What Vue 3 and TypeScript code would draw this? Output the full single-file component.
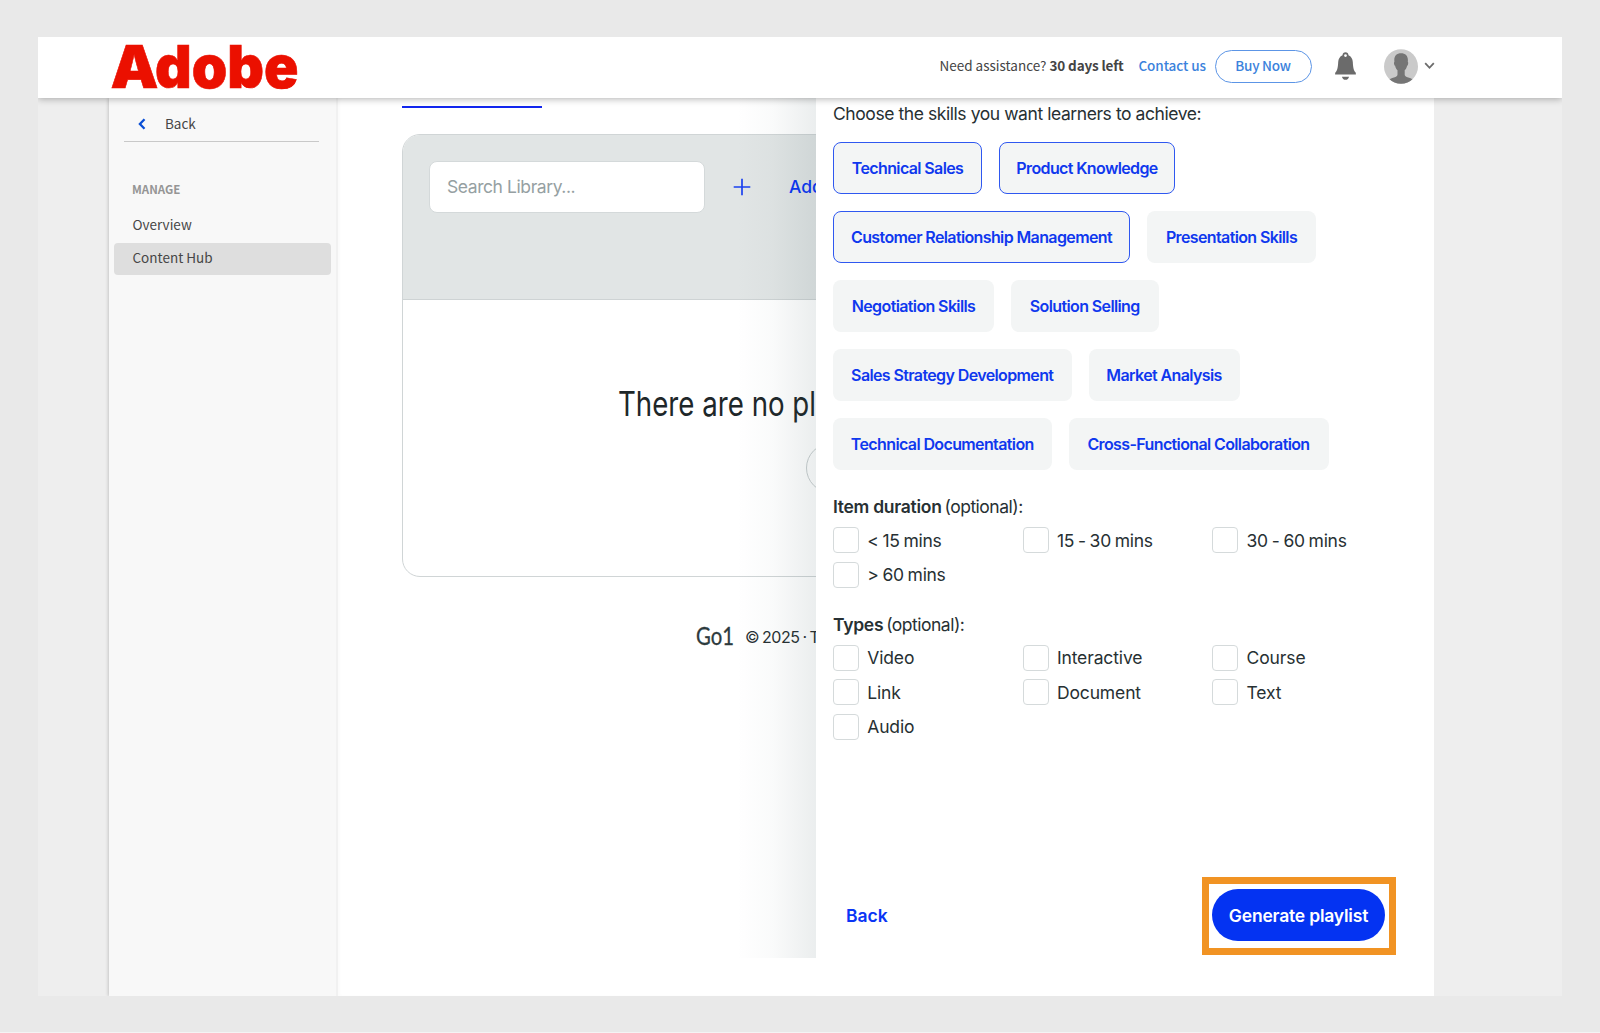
<script setup lang="ts">
import { ref } from 'vue'

interface Skill {
  label: string
  width: number
  selected: boolean
}

const skillRows = ref<Skill[][]>([
  [
    { label: 'Technical Sales', width: 149, selected: true },
    { label: 'Product Knowledge', width: 176, selected: true },
  ],
  [
    { label: 'Customer Relationship Management', width: 297, selected: true },
    { label: 'Presentation Skills', width: 169, selected: false },
  ],
  [
    { label: 'Negotiation Skills', width: 161, selected: false },
    { label: 'Solution Selling', width: 147.5, selected: false },
  ],
  [
    { label: 'Sales Strategy Development', width: 238.5, selected: false },
    { label: 'Market Analysis', width: 151, selected: false },
  ],
  [
    { label: 'Technical Documentation', width: 218.5, selected: false },
    { label: 'Cross-Functional Collaboration', width: 260, selected: false },
  ],
])

const durations = ['< 15 mins', '15 - 30 mins', '30 - 60 mins', '> 60 mins']
const types = ['Video', 'Interactive', 'Course', 'Link', 'Document', 'Text', 'Audio']
</script>

<template>
  <div class="page">
    <div class="frame">
      <header class="topbar">
        <svg class="logo" width="190" height="61" viewBox="0 0 190 61">
          <text y="51.400"><tspan x="0.500" textLength="48" lengthAdjust="spacingAndGlyphs">A</tspan><tspan x="45" textLength="143.500" lengthAdjust="spacingAndGlyphs">dobe</tspan></text>
        </svg>
        <div class="account">
          <span class="assist">Need assistance? <b>30 days left</b></span>
          <a class="contact">Contact us</a>
          <button class="buy">Buy Now</button>
          <svg class="bell" width="21" height="29" viewBox="0 0 21 29">
            <path
              fill="#6b6b6b"
              fill-rule="evenodd"
              d="M10.500 .3c1.700 0 3 1.200 3 2.900 2.700 1.200 4.100 3.600 4.300 6.800.3 5.300.7 8.300 2.600 10.200.4.400.5 1 .5 2.300H.1c0-1.300.1-1.900.5-2.300 1.900-1.900 2.300-4.900 2.600-10.200.2-3.200 1.600-5.600 4.300-6.800 0-1.700 1.300-2.900 3-2.900zm0 1.900a1.400 1.400 0 1 0 0 2.800 1.400 1.400 0 0 0 0-2.800z"
            />
            <path fill="#6b6b6b" d="M7 24.700h7c-.3 2-1.700 3.100-3.500 3.100S7.300 26.700 7 24.700z" />
          </svg>
          <svg class="avatar" width="34" height="35" viewBox="0 0 34 35">
            <defs>
              <clipPath id="avatar-clip"><ellipse cx="17" cy="17.500" rx="17" ry="17.300" /></clipPath>
            </defs>
            <g clip-path="url(#avatar-clip)">
              <rect width="34" height="35" fill="#cacaca" />
              <path
                fill="#757575"
                d="M17 4.200c4.300 0 6.900 2.500 6.900 6.800 0 .7 0 1.500-.1 2.100.5.200.5 1.200.2 2.300-.2.800-.5 1.300-.9 1.400-.5 2-1.300 3.500-2.400 4.500v4.200c0 1.700 1.200 2.300 3.500 3 2.600.8 4.400 1.500 6 2.900V35H4v-3.600c1.600-1.400 3.400-2.100 6-2.900 2.300-.7 3.500-1.300 3.500-3v-4.200c-1.100-1-1.900-2.500-2.400-4.500-.4-.1-.7-.6-.9-1.400-.3-1.100-.3-2.100.2-2.300-.1-.6-.1-1.400-.1-2.100 0-4.300 2.400-6.800 6.700-6.800z"
              />
            </g>
          </svg>
          <svg class="caret" width="11" height="8" viewBox="0 0 11 8">
            <path d="M1.200 1.200 5.500 5.800 9.800 1.200" fill="none" stroke="#6b6b6b" stroke-width="1.800" />
          </svg>
        </div>
      </header>

      <div class="body">
        <aside class="sidebar">
          <a class="back">
            <svg width="8" height="12" viewBox="0 0 8 12">
              <path d="M6.500 1.200 1.900 6l4.600 4.800" fill="none" stroke="#0a4fd6" stroke-width="2.300" />
            </svg>
            <span>Back</span>
          </a>
          <h2>MANAGE</h2>
          <nav>
            <a>Overview</a>
            <a class="active">Content Hub</a>
          </nav>
        </aside>

        <main class="main">
          <div class="tab-line"></div>
          <section class="library">
            <div class="library-head">
              <div class="search">Search Library...</div>
              <svg class="plus" width="18" height="18" viewBox="0 0 18 18">
                <path d="M9 .7v16.600M.7 9h16.600" stroke="#1a41f0" stroke-width="1.700" />
              </svg>
              <span class="add">Add</span>
            </div>
            <div class="library-body">
              <svg class="empty" width="220" height="46" viewBox="0 0 220 46">
                <text x="-1" y="32.600" textLength="198" lengthAdjust="spacingAndGlyphs">There are no pl</text>
              </svg>
              <div class="pill"></div>
            </div>
          </section>
          <footer class="credits">
            <svg width="38" height="28" viewBox="0 0 38 28">
              <text x="0" y="22.300" textLength="38" lengthAdjust="spacingAndGlyphs">Go1</text>
            </svg>
            <span>© 2025 · T</span>
          </footer>

          <div class="panel-shade"></div>
          <section class="panel">
            <p class="prompt">Choose the skills you want learners to achieve:</p>
            <div class="skills">
              <div v-for="(row, i) in skillRows" :key="i" class="skill-row">
                <button
                  v-for="skill in row"
                  :key="skill.label"
                  class="chip"
                  :class="{ selected: skill.selected }"
                  :style="{ width: skill.width + 'px' }"
                  @click="skill.selected = !skill.selected"
                >
                  {{ skill.label }}
                </button>
              </div>
            </div>

            <p class="group-title durations-title"><b>Item duration</b> (optional):</p>
            <div class="options durations">
              <label v-for="d in durations" :key="d"><i></i><span>{{ d }}</span></label>
            </div>

            <p class="group-title types-title"><b>Types</b> (optional):</p>
            <div class="options types">
              <label v-for="t in types" :key="t"><i></i><span>{{ t }}</span></label>
            </div>

            <div class="actions">
              <a class="panel-back">Back</a>
              <div class="highlight">
                <button class="generate">Generate playlist</button>
              </div>
            </div>
          </section>
        </main>
      </div>
    </div>
  </div>
</template>

<style>
body {
  background: #f4f4f4;
}
</style>

<style scoped>
* {
  box-sizing: border-box;
}
p,
h2 {
  margin: 0;
}
button {
  font: inherit;
  padding: 0;
  border: 0;
  margin: 0;
}
svg {
  overflow: visible;
}
.page {
  height: 1032px;
  overflow: hidden;
  background: #e9e9e9;
  padding: 37px 38px 0;
  font-family: Inter, 'Liberation Sans', sans-serif;
  color: #273033;
}
.frame {
  height: 959px;
  background: #eee;
  overflow: hidden;
  display: flex;
  flex-direction: column;
}

/* top bar */
.topbar {
  position: relative;
  z-index: 3;
  flex: none;
  height: 61px;
  background: #fff;
  box-shadow: 0 1px 7px rgba(0, 0, 0, 0.3);
  display: flex;
  padding-left: 72px;
  padding-right: 127px;
  font-family: 'Noto Sans CJK SC', 'Noto Sans', sans-serif;
  font-size: 13.5px;
  color: #444;
}
.logo text {
  font-family: Inter, sans-serif;
  font-weight: 900;
  font-size: 59px;
  fill: #eb1000;
  stroke: #eb1000;
  stroke-width: 0.6px;
}
.account {
  margin-left: auto;
  height: 58px;
  display: flex;
  align-items: center;
  white-space: nowrap;
}
.assist {
  width: 185px;
  line-height: 20px;
  margin-top: -2px;
  padding-left: 1px;
}
.assist b {
  letter-spacing: -0.15px;
}
.contact {
  width: 67px;
  margin-left: 15px;
  margin-top: -2px;
  line-height: 20px;
  color: #3b82dc;
  font-weight: 500;
  letter-spacing: -0.1px;
}
.buy {
  width: 97px;
  height: 33px;
  margin-left: 9px;
  border: 1.500px solid #5c95e6;
  border-radius: 17px;
  background: #fff;
  color: #3b82dc;
  font-weight: 500;
  line-height: 20px;
  letter-spacing: -0.2px;
  padding-bottom: 2px;
}
.bell {
  margin-left: 23.500px;
  margin-top: 1px;
}
.avatar {
  margin-left: 28px;
  margin-top: 1px;
}
.caret {
  margin-left: 6px;
}

/* sidebar */
.body {
  flex: 1;
  display: flex;
  padding: 0 128px 0 71px;
}
.sidebar {
  width: 227px;
  flex: none;
  background: #f8f8f8;
  box-shadow: -1px 0 3px rgba(0, 0, 0, 0.17);
  font-family: 'Noto Sans CJK SC', 'Noto Sans', sans-serif;
  font-size: 13.500px;
  color: #464646;
}
.back {
  display: flex;
  align-items: center;
  width: 195px;
  height: 44px;
  margin-left: 15px;
  padding: 9px 0 0 14px;
  border-bottom: 1px solid #c9c9c9;
}
.back span {
  margin-left: 19px;
  line-height: 20px;
  margin-top: -2px;
}
.sidebar h2 {
  margin: 37px 0 0 23px;
  font-size: 11.500px;
  line-height: 20px;
  font-weight: 700;
  color: #959595;
}
.sidebar nav {
  margin: 11px 5px 0 4.500px;
}
.sidebar nav a {
  display: block;
  height: 32.500px;
  line-height: 29px;
  padding-left: 19px;
  border-radius: 4px;
}
.sidebar nav .active {
  background: #dedede;
}

/* library */
.main {
  position: relative;
  z-index: 1;
  flex: 1;
  background: #fff;
  padding: 8px 0 0 66px;
  box-shadow: inset 2px 0 0 #f1f1f1, inset 4px 0 3px rgba(0, 0, 0, 0.02);
}
.tab-line {
  width: 140px;
  height: 2px;
  background: #1226ee;
}
.library {
  width: 900px;
  height: 443px;
  margin-top: 26px;
  border: 1px solid #d0d5d6;
  border-radius: 18px;
  overflow: hidden;
}
.library-head {
  height: 165px;
  background: #e1e5e5;
  border-bottom: 1px solid #ced3d4;
  padding: 26px 0 0 26px;
  display: flex;
}
.search {
  width: 276px;
  height: 52px;
  border: 1px solid #d4d9da;
  border-radius: 8px;
  background: #fff;
  color: #95a0a2;
  font-size: 17.500px;
  line-height: 50px;
  letter-spacing: -0.42px;
  padding-left: 17px;
}
.plus {
  margin: 17px 0 0 27.500px;
}
.add {
  margin-left: 38.500px;
  line-height: 52px;
  font-size: 17.500px;
  font-weight: 500;
  color: #0a35f5;
}
.library-body {
  padding: 83px 0 0 216px;
}
.empty,
.credits svg {
  display: block;
}
.empty text {
  font-family: Inter, sans-serif;
  font-size: 34px;
  fill: #1e2729;
}
.pill {
  width: 200px;
  height: 50px;
  margin: 13.500px 0 0 187px;
  border: 1px solid #c9cfd0;
  border-radius: 25px;
}
.credits {
  display: flex;
  align-items: center;
  margin: 46px 0 0 294px;
  height: 28px;
  font-size: 16px;
  letter-spacing: -0.45px;
  word-spacing: -1.200px;
}
.credits svg text {
  font-family: Lato, sans-serif;
  font-size: 25px;
  letter-spacing: 0;
  word-spacing: 0;
  fill: #2d3a3d;
  stroke: #2d3a3d;
  stroke-width: 0.3px;
}
.credits span {
  margin-left: 11px;
  margin-top: -1px;
}

/* slide-over panel */
.panel-shade {
  position: absolute;
  left: 400px;
  top: 0;
  width: 80px;
  height: 860px;
  background: linear-gradient(to right, rgba(40, 70, 75, 0), rgba(40, 70, 75, 0.022) 45%, rgba(40, 70, 75, 0.095));
}
.panel {
  position: absolute;
  left: 480px;
  top: 0;
  right: 0;
  bottom: 0;
  background: #fff;
  padding-left: 17px;
  display: flex;
  flex-direction: column;
}
.prompt {
  margin-top: 4px;
  line-height: 24px;
  font-size: 17.500px;
  letter-spacing: -0.43px;
}
.skills {
  margin-top: 16px;
  display: flex;
  flex-direction: column;
  gap: 17px;
}
.skill-row {
  display: flex;
  gap: 17px;
}
.chip {
  height: 52px;
  border: 1.500px solid transparent;
  border-radius: 8px;
  background: #f3f5f5;
  color: #0f38ee;
  font-size: 16px;
  font-weight: 600;
  letter-spacing: -0.62px;
  white-space: nowrap;
  padding-bottom: 1px;
}
.chip.selected {
  border-color: #2f58f0;
}
.group-title {
  line-height: 24px;
  font-size: 17.500px;
  letter-spacing: -0.5px;
  word-spacing: -1.500px;
}
.group-title b {
  font-weight: 600;
  letter-spacing: -0.28px;
  word-spacing: 0;
}
.durations-title {
  margin-top: 25px;
}
.options {
  display: grid;
  grid-template-columns: repeat(3, 189.700px);
  grid-auto-rows: 26px;
  row-gap: 8.500px;
  font-size: 17.500px;
  letter-spacing: -0.12px;
}
.durations {
  margin-top: 8px;
  letter-spacing: -0.3px;
  word-spacing: -0.7px;
}
.types-title {
  margin-top: 25px;
}
.types {
  margin-top: 8px;
}
.options label {
  display: flex;
  align-items: center;
}
.options i {
  width: 26px;
  height: 26px;
  border: 1.500px solid #d5dadb;
  border-radius: 4px;
}
.options span {
  margin-left: 8.200px;
}
.actions {
  display: flex;
  justify-content: space-between;
  align-items: center;
  margin-top: auto;
  margin-bottom: 41px;
  padding: 0 38px 0 13px;
}
.panel-back {
  font-size: 17.500px;
  font-weight: 600;
  color: #0a35f5;
  margin-top: -2px;
}
.highlight {
  width: 194px;
  height: 78px;
  border: 7px solid #f19323;
  padding: 5px 0 0 3px;
}
.generate {
  display: block;
  width: 173px;
  height: 52px;
  border-radius: 26px;
  background: #0433f2;
  color: #fff;
  font-size: 17.500px;
  font-weight: 600;
  letter-spacing: -0.2px;
}
</style>
